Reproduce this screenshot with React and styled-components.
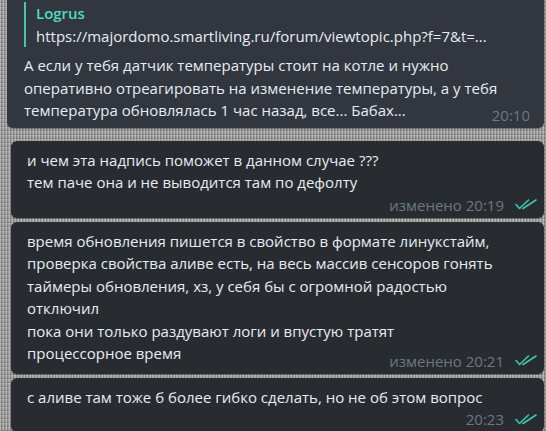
import React from "react";
import styled, { createGlobalStyle } from "styled-components";

const Global = createGlobalStyle`
  html, body { margin: 0; padding: 0; }
  body {
    width: 546px;
    height: 431px;
    overflow: hidden;
    font-family: "Open Sans", "Noto Sans", sans-serif;
    background-color: #9d9d9d;
    background-image:
      repeating-linear-gradient(90deg, rgba(255,255,255,0.22) 0 1px, rgba(0,0,0,0.16) 1px 2px, transparent 2px 3px),
      repeating-linear-gradient(0deg, rgba(0,0,0,0.14) 0 1px, transparent 1px 3px, rgba(255,255,255,0.16) 3px 4px);
  }
`;

const Feed = styled.div`
  display: flex;
  flex-direction: column;
  margin-top: -8px;
  padding-right: 2px;
`;

const Bubble = styled.div`
  margin-left: ${(p) => (p.$first ? 7 : 11)}px;
  margin-top: ${(p) => p.$gap || 0}px;
  background: ${(p) => (p.$first ? "#32363e" : "#282c31")};
  border-radius: 6px;
  padding: ${(p) => (p.$first ? "10px 14px 3px 17px" : "8px 14px 3px 16px")};
  color: #e6edf3;
  font-size: 15px;
  line-height: 22.5px;
  box-shadow: 0 1px 1px rgba(0, 0, 0, 0.3);
`;

const Reply = styled.div`
  display: flex;
  flex-direction: column;
  border-left: 2px solid #3ec7ad;
  padding-left: 10px;
  margin-bottom: 7px;
`;

const ReplyName = styled.div`
  color: #4fdbbf;
  font-weight: 600;
`;

const ReplyText = styled.div`
  color: #e6edf3;
  white-space: nowrap;
`;

const Text = styled.div`
  white-space: pre-wrap;
`;

const Meta = styled.div`
  display: flex;
  justify-content: flex-end;
  align-items: center;
  gap: 11px;
  color: #6c7883;
  font-size: 15px;
  line-height: 20px;
  margin-top: ${(p) => p.$mt || 0}px;
  margin-right: ${(p) => (p.$checked ? -7 : 0)}px;
`;

const Check = () => (
  <svg width="22" height="11" viewBox="0 0 22 11" fill="none" stroke="#3fc6b0" strokeWidth="1.6" strokeLinecap="round" strokeLinejoin="round">
    <path d="M1 5.5 L4.5 9.5 L13.5 1" />
    <path d="M8 9.5 L21 1" />
  </svg>
);

export default function App() {
  return (
    <>
      <Global />
      <Feed>
        <Bubble $first>
          <Reply>
            <ReplyName>Logrus</ReplyName>
            <ReplyText>https://majordomo.smartliving.ru/forum/viewtopic.php?f=7&amp;t=...</ReplyText>
          </Reply>
          <Text>
            А если у тебя датчик температуры стоит на котле и нужно{"\n"}оперативно отреагировать на изменение температуры, а у тебя{"\n"}температура обновлялась 1 час назад, все... Бабах...
          </Text>
          <Meta $mt={-17}>20:10</Meta>
        </Bubble>
        <Bubble $gap={13}>
          <Text>
            и чем эта надпись поможет в данном случае ???{"\n"}тем паче она и не выводится там по дефолту
          </Text>
          <Meta $mt={1} $checked>
            изменено 20:19 <Check />
          </Meta>
        </Bubble>
        <Bubble $gap={4}>
          <Text>
            время обновления пишется в свойство в формате линукстайм,{"\n"}проверка свойства аливе есть, на весь массив сенсоров гонять{"\n"}таймеры обновления, хз, у себя бы с огромной радостью{"\n"}отключил{"\n"}пока они только раздувают логи и впустую тратят{"\n"}процессорное время
          </Text>
          <Meta $mt={-14} $checked>
            изменено 20:21 <Check />
          </Meta>
        </Bubble>
        <Bubble $gap={4}>
          <Text>с аливе там тоже б более гибко сделать, но не об этом вопрос</Text>
          <Meta $mt={1} $checked>
            20:23 <Check />
          </Meta>
        </Bubble>
      </Feed>
    </>
  );
}
